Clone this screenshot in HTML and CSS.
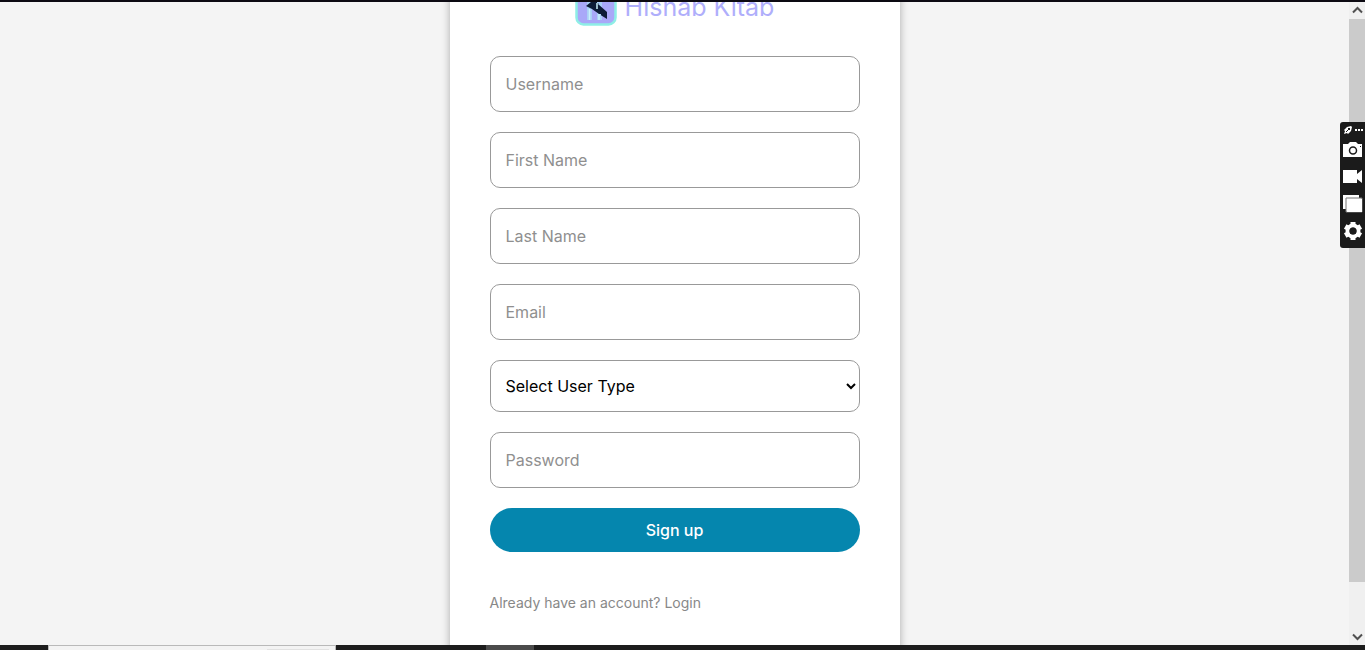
FILE: index.html
```html
<!DOCTYPE html>
<html lang="en">
<head>
<meta charset="utf-8">
<title>Hishab Kitab</title>
<link rel="stylesheet" href="styles.css">
</head>
<body>
<div class="edge"></div>
<div class="window">
  <main class="page">
    <section class="card">
      <header class="brand">
        <svg class="brand-mark" width="42" height="42" viewBox="0 0 42 42" aria-hidden="true">
          <rect x="1.500" y="1.500" width="39" height="39" rx="7" fill="#a9a8f8" stroke="#8eeee6" stroke-width="2.500"/>
          <path d="M12 7h5v29h-5zM22 7h5v29h-5z" fill="#a9cff6"/>
          <path d="M27 7v7l-4 6 9 8v7l-8-5-7-5-6-3 5-4z" fill="#0d1c36"/>
          <path d="M12.500 25h4v11h-4zM22 7h4v12h-4zM22 30h4v6h-4z" fill="#a9cff6"/>
          <path d="M14.500 25v11M24 30v6M22 19v6" stroke="#c9f0fa" stroke-width="1.500"/>
        </svg>
        <span class="brand-name">Hishab Kitab</span>
      </header>
      <form class="form">
        <input class="field" type="text" placeholder="Username" aria-label="Username">
        <input class="field" type="text" placeholder="First Name" aria-label="First Name">
        <input class="field" type="text" placeholder="Last Name" aria-label="Last Name">
        <input class="field" type="email" placeholder="Email" aria-label="Email">
        <select class="field field-select" aria-label="User type"><option>Select User Type</option></select>
        <input class="field" type="password" placeholder="Password" aria-label="Password">
        <button class="submit" type="button">Sign up</button>
      </form>
      <p class="login">Already have an account? <a class="login-link" href="#">Login</a></p>
    </section>
  </main>
  <div class="scrollbar" aria-hidden="true">
    <svg class="arrow" width="16" height="17" viewBox="0 0 16 17"><path d="M4 10.500l4.500-4.500 4.500 4.500" fill="none" stroke="#505050" stroke-width="2"/></svg>
    <div class="track"><div class="thumb"></div></div>
    <svg class="arrow" width="16" height="17" viewBox="0 0 16 17"><path d="M4 6.500l4.500 4.500 4.500-4.500" fill="none" stroke="#505050" stroke-width="2"/></svg>
  </div>
</div>
<footer class="taskbar"><div class="search"><div class="search-mark"></div></div><div class="task"></div></footer>
<aside class="recorder">
  <svg width="25" height="126" viewBox="0 0 25 126" fill="#fff" aria-hidden="true">
    <path d="M4 12l1-3-1-1 3-3 4-1 1 1-1 4-3 3-1-1z"/>
    <path d="M6 10l4-4M8 6l2 2" stroke="#1b1b1b" stroke-width="1"/>
    <path d="M15 7h2v2h-2zM18 7h2v2h-2zM21 7h2v2h-2z"/>
    <path d="M3 22h5l2-2h6l2 2h4v13H3z"/>
    <circle cx="13" cy="28.500" r="3.500" fill="none" stroke="#1b1b1b" stroke-width="1.500"/>
    <path d="M20 24h1v1h-1z" fill="#1b1b1b"/>
    <path d="M3 48h14v4l5-4v13l-5-4v4H3z"/>
    <path d="M3 73h16v3H6v11H3z"/><path d="M6 76h16v14H6z" stroke="#777" stroke-width="1"/><path d="M7 77h15v13H7z"/>
    <g transform="translate(13 109)"><circle r="5.500" fill="none" stroke="#fff" stroke-width="4"/>
    <g stroke="#fff" stroke-width="5"><path d="M0-9v4M0 5v4"/><path d="M0-9v4M0 5v4" transform="rotate(60)"/><path d="M0-9v4M0 5v4" transform="rotate(120)"/></g><circle r="3.500" fill="#1b1b1b"/></g>
  </svg>
</aside>
</body>
</html>
```
FILE: styles.css
```css
* { box-sizing: border-box; }
body {
  margin: 0;
  height: 100vh;
  display: flex;
  flex-direction: column;
  overflow: hidden;
  background: #f4f4f4;
  font-family: Inter, "Liberation Sans", sans-serif;
}
.edge { flex: none; height: 2px; background: #0c0a12; }
.window { flex: 1; min-height: 0; display: flex; }
.page {
  flex: 1;
  display: flex;
  justify-content: center;
  align-items: flex-start;
  overflow: hidden;
}
.card {
  width: 450px;
  min-height: 100%;
  margin-top: -60px;
  padding: 42px 40px 60px;
  background: #fff;
  box-shadow: 0 0 8px rgba(0, 0, 0, 0.3);
}
.brand {
  display: flex;
  justify-content: center;
  align-items: flex-end;
  gap: 8px;
  margin-bottom: 30px;
}
.brand-name { font-size: 25px; line-height: 38px; color: #afaefb; }
.form { display: flex; flex-direction: column; gap: 20px; }
.field {
  width: 100%;
  height: 56px;
  padding: 0 15px;
  border: 1px solid #999;
  border-radius: 10px;
  background: #fff;
  color: #000;
  font: 400 16px Inter, "Liberation Sans", sans-serif;
}
.field::placeholder { color: #8f8f8f; }
.field-select { height: 52px; padding: 0 1px 0 11px; }
.submit {
  height: 44px;
  border: 0;
  border-radius: 22px;
  background: #0586ae;
  color: #fff;
  font: 500 16px Inter, "Liberation Sans", sans-serif;
}
.login { margin: 40px 0 0; font-size: 14px; line-height: 22px; color: #888; }
.login-link { color: inherit; text-decoration: none; }
.scrollbar { flex: none; width: 16px; display: flex; flex-direction: column; background: #f0f0f0; }
.arrow { flex: none; display: block; }
.track { flex: 1; display: flex; flex-direction: column; padding-bottom: 46px; }
.thumb { flex: 1; background: #cbcbcb; }
.taskbar { flex: none; height: 5px; display: flex; background: #1d1d1d; }
.search {
  width: 288px;
  margin-left: 48px;
  display: flex;
  justify-content: flex-end;
  align-items: flex-end;
  padding-right: 6px;
  border: 1px solid #b9b9b9;
  border-bottom: 0;
  background: #f3f3f3;
}
.search-mark { width: 62px; height: 1px; background: #e2e2e2; }
.task { width: 48px; margin-left: 150px; background: #4b4b4b; }
.recorder {
  position: absolute;
  top: 122px;
  right: 0;
  border-radius: 3px 0 0 3px;
  background: #1b1b1b;
}
.recorder svg { display: block; }
```
